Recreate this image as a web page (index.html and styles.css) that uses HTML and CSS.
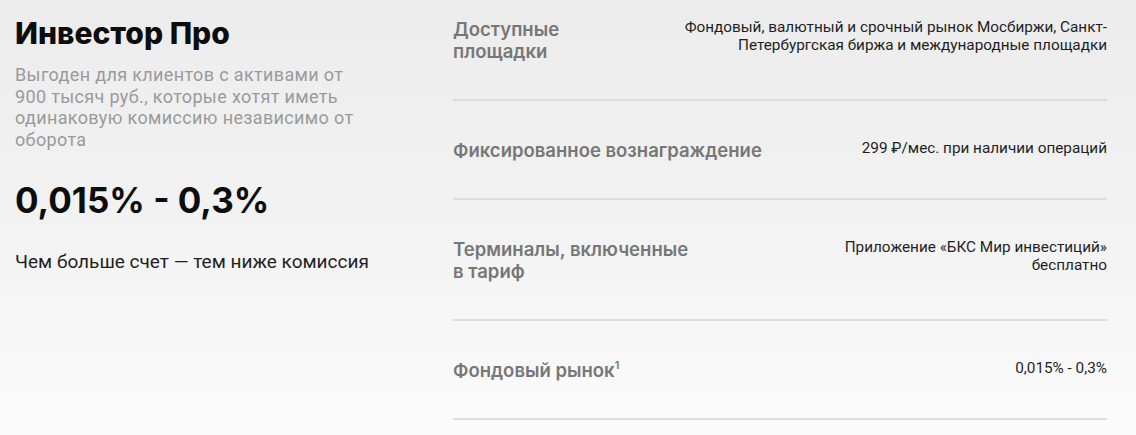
FILE: index.html
```html
<!DOCTYPE html>
<html lang="ru">
<head>
<meta charset="utf-8">
<title>Инвестор Про</title>
<link rel="stylesheet" href="styles.css">
</head>
<body>
<div class="tariff">
  <section class="summary">
    <h1 class="title">Инвестор Про</h1>
    <p class="desc">Выгоден для клиентов с активами от 900 тысяч руб., которые хотят иметь одинаковую комиссию независимо от оборота</p>
    <div class="rate">0,015% - 0,3%</div>
    <p class="note">Чем больше счет — тем ниже комиссия</p>
  </section>
  <section class="details">
    <div class="row first">
      <div class="label">Доступные<br>площадки</div>
      <div class="value">Фондовый, валютный и срочный рынок Мосбиржи, Санкт-<br>Петербургская биржа и международные площадки</div>
    </div>
    <div class="row">
      <div class="label">Фиксированное вознаграждение</div>
      <div class="value">299 ₽/мес. при наличии операций</div>
    </div>
    <div class="row">
      <div class="label">Терминалы, включенные<br>в тариф</div>
      <div class="value">Приложение «БКС Мир инвестиций»<br>бесплатно</div>
    </div>
    <div class="row">
      <div class="label">Фондовый рынок<sup>1</sup></div>
      <div class="value">0,015% - 0,3%</div>
    </div>
  </section>
</div>
</body>
</html>
```
FILE: styles.css
```css
html, body {
  margin: 0;
  padding: 0;
}
body {
  width: 1136px;
  height: 435px;
  overflow: hidden;
  background: linear-gradient(180deg, #ececec 0%, #f2f2f2 50%, #fbfbfb 100%);
  font-family: Roboto, "Liberation Sans", sans-serif;
  color: #1f1f1f;
}
.tariff {
  display: flex;
  padding: 0 29px 0 15px;
}
.summary {
  width: 362px;
  flex: none;
  padding-top: 14px;
}
.title {
  margin: 0;
  font-family: Inter, "Noto Sans", sans-serif;
  font-weight: 800;
  font-size: 30px;
  line-height: 38px;
  letter-spacing: 0;
  color: #0d0d0d;
}
.desc {
  margin: 12px 0 0;
  font-size: 18px;
  line-height: 21.7px;
  letter-spacing: 0.35px;
  color: #9a9a9a;
}
.rate {
  margin-top: 27px;
  font-family: Inter, "Noto Sans", sans-serif;
  font-weight: 700;
  font-size: 35px;
  line-height: 44px;
  color: #0d0d0d;
}
.note {
  margin: 29px 0 0;
  font-size: 19px;
  line-height: 22px;
  color: #1f1f1f;
}
.details {
  margin-left: 76px;
  flex: 1;
}
.row {
  display: flex;
  justify-content: space-between;
  align-items: flex-start;
  padding: 38px 0 37px;
  border-bottom: 2px solid #dcdcdc;
}
.row.first {
  padding-top: 18px;
}
.label {
  font-family: Inter, "Noto Sans", sans-serif;
  font-weight: 600;
  font-size: 18.5px;
  line-height: 22px;
  color: #777777;
}
.label sup {
  font-size: 11px;
  line-height: 0;
  vertical-align: 8px;
}
.value {
  text-align: right;
  font-size: 15.3px;
  line-height: 18px;
  color: #1f1f1f;
}
```
